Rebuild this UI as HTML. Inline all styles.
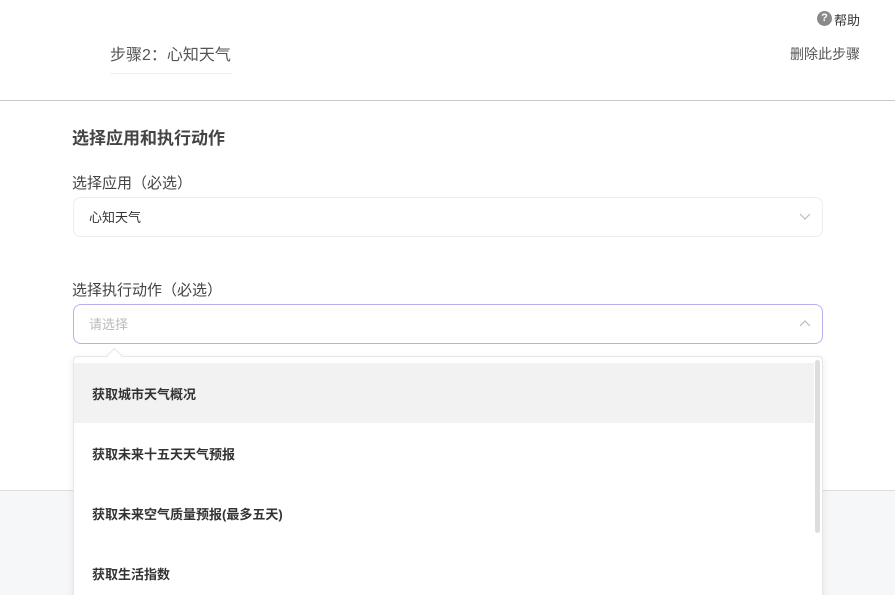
<!DOCTYPE html>
<html><head><meta charset="utf-8"><style>
html,body{margin:0;width:895px;height:595px;overflow:hidden}
body{background:#fff;font-family:"Liberation Sans","Noto Sans CJK SC",sans-serif;position:relative;color:#333}
.abs{position:absolute}
</style></head><body>
<div class="abs" style="left:0;top:0;width:895px;height:100px;border-bottom:1px solid #c8c8c8"></div>
<div class="abs" style="left:817px;top:11px;width:15px;height:15px;border-radius:50%;background:#8a8a8a;color:#fff;font-size:11px;line-height:15px;text-align:center;font-weight:bold">?</div>
<div class="abs" style="left:834px;top:10px;font-size:13px;color:#333">帮助</div>
<div class="abs" style="left:110px;top:41px;font-size:16px;color:#555">步骤2：心知天气</div>
<div class="abs" style="left:110px;top:73px;width:122px;height:1px;background:#eee"></div>
<div class="abs" style="left:790px;top:44px;font-size:14px;color:#555">删除此步骤</div>
<div class="abs" style="left:72px;top:124px;font-size:17px;font-weight:bold;color:#444">选择应用和执行动作</div>
<div class="abs" style="left:72px;top:172px;font-size:15px;color:#444">选择应用（必选）</div>
<div class="abs" style="left:73px;top:197px;width:748px;height:38px;border:1px solid #ececec;border-radius:8px"></div>
<div class="abs" style="left:89px;top:207px;font-size:13px;color:#333">心知天气</div>
<svg class="abs" style="left:799px;top:211px" width="12" height="10"><path d="M1 3l5 5 5-5" fill="none" stroke="#bbb" stroke-width="1.2"/></svg>
<div class="abs" style="left:72px;top:279px;font-size:15px;color:#444">选择执行动作（必选）</div>
<div class="abs" style="left:73px;top:304px;width:748px;height:38px;border:1px solid #b8b0f0;border-radius:8px"></div>
<div class="abs" style="left:89px;top:314px;font-size:13px;color:#bbb">请选择</div>
<svg class="abs" style="left:799px;top:318px" width="12" height="10"><path d="M1 8l5-5 5 5" fill="none" stroke="#bbb" stroke-width="1.2"/></svg>
<div class="abs" style="left:0;top:490px;width:895px;height:105px;background:#f6f7f9;border-top:1px solid #ddd"></div>
<div class="abs" style="left:73px;top:356px;width:748px;height:250px;background:#fff;border:1px solid #e6e6e6;border-radius:4px;box-shadow:0 2px 8px rgba(0,0,0,.08)"></div>
<div class="abs" style="left:109px;top:350px;width:10px;height:10px;background:#fff;border-left:1px solid #e6e6e6;border-top:1px solid #e6e6e6;transform:rotate(45deg)"></div>
<div class="abs" style="left:74px;top:363px;width:740px;height:60px;background:#f2f2f2"></div>
<div class="abs" style="left:815px;top:360px;width:5px;height:173px;background:#ddd;border-radius:3px"></div>
<div class="abs" style="left:92px;top:384px;font-size:13px;font-weight:bold;color:#333">获取城市天气概况</div>
<div class="abs" style="left:92px;top:444px;font-size:13px;font-weight:bold;color:#333">获取未来十五天天气预报</div>
<div class="abs" style="left:92px;top:504px;font-size:13px;font-weight:bold;color:#333">获取未来空气质量预报(最多五天)</div>
<div class="abs" style="left:92px;top:564px;font-size:13px;font-weight:bold;color:#333">获取生活指数</div>
</body></html>
